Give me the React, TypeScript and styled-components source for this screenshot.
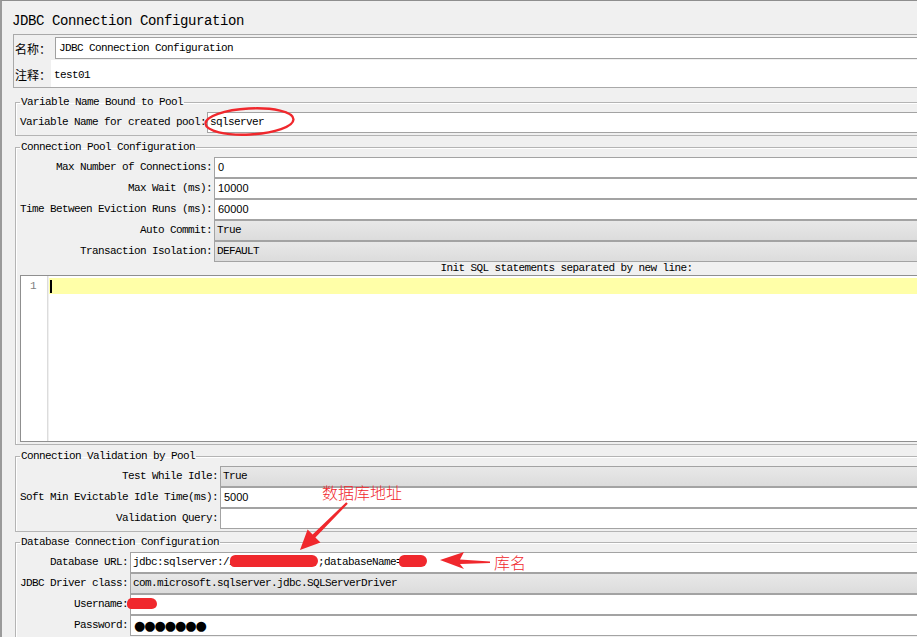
import styled, { createGlobalStyle } from "styled-components";

const MONO = `"Liberation Mono", "Noto Sans CJK SC", monospace`;
const CJK = `"Noto Sans CJK SC", sans-serif`;
const RED = "#f0282d";

const Global = createGlobalStyle`
  html, body {
    margin: 0;
    padding: 0;
    background: #f0f0f0;
    overflow: hidden;
  }
  body {
    font-family: ${MONO};
    font-size: 11px;
    letter-spacing: -0.6px;
    color: #000;
  }
`;

const Window = styled.div`
  position: relative;
  width: 917px;
  height: 637px;
  box-sizing: border-box;
  border-top: 1px solid #8e8e8e;
  border-left: 2px solid #9a9a9a;
  background: #f0f0f0;
  overflow: hidden;
`;

const Title = styled.div`
  height: 33px;
  box-sizing: border-box;
  padding: 7px 0 0 10px;
  font-size: 14px;
  letter-spacing: -0.4px;
  line-height: 26px;
`;

const NamePanel = styled.div`
  margin-left: 11px;
  height: 54px;
  box-sizing: border-box;
  border: 1px solid #a9a9a9;
  border-right: none;
  padding-top: 2px;
  display: flex;
  flex-direction: column;
  gap: 1px;
`;

const NameRow = styled.div<{ $h: number }>`
  display: flex;
  height: ${(p) => p.$h}px;
`;

const CnLabel = styled.div<{ $w: number }>`
  width: ${(p) => p.$w}px;
  padding: 1px 0 0 1px;
  box-sizing: border-box;
  font-family: ${CJK};
  font-size: 12px;
  letter-spacing: 0;
  display: flex;
  align-items: center;
`;

const NameInput = styled.div`
  flex: 1;
  background: #fff;
  border: 1px solid #a0a0a0;
  border-right: none;
  padding-left: 3px;
  line-height: 20px;
`;

const Comment = styled.div`
  flex: 1;
  background: #fff;
  padding: 2px 0 0 3px;
  line-height: 26px;
`;

const Group = styled.fieldset<{ $mt: number }>`
  margin: ${(p) => p.$mt}px 0 0 13px;
  padding: 4px 0 2px 4px;
  border: 1px solid #b4b4b4;
  border-right: none;
  min-width: 0;
  box-shadow: inset 1px 1px 0 #fff;
`;

const Legend = styled.legend`
  padding: 0 1px;
  margin-left: 0;
  line-height: 12px;
  font-size: 11px;
`;

const FormRow = styled.div<{ $label: number }>`
  display: grid;
  grid-template-columns: ${(p) => p.$label}px 1fr;
  height: 21px;
`;

const Label = styled.div<{ $left?: boolean }>`
  text-align: ${(p) => (p.$left ? "left" : "right")};
  padding-right: 2px;
  line-height: 21px;
  white-space: nowrap;
`;

const Field = styled.div<{ $gray?: boolean }>`
  height: 21px;
  box-sizing: border-box;
  border-top: 1px solid #a3a3a3;
  border-bottom: 1px solid #a3a3a3;
  border-left: 1px solid #a3a3a3;
  background: ${(p) => (p.$gray ? "linear-gradient(#e8e8e8, #dcdcdc)" : "#fff")};
  padding-left: 2px;
  line-height: 19px;
  white-space: nowrap;
  overflow: hidden;
`;

const Num = styled.span`
  font-family: "Liberation Sans", Arial, sans-serif;
  font-size: 11px;
  letter-spacing: 0;
  padding-left: 1px;
`;

/* the real window is wider than the shot, so the caption sits right of centre */
const InitLabel = styled.div`
  height: 13px;
  line-height: 13px;
  padding-left: 196px;
  text-align: center;
  white-space: nowrap;
`;

const Editor = styled.div`
  height: 167px;
  box-sizing: border-box;
  border: 1px solid #8f8f8f;
  border-right: none;
  background: #fff;
  display: flex;
`;

const Gutter = styled.div`
  width: 27px;
  border-right: 1px solid #dcdcdc;
  color: #808080;
  padding: 3px 0 0 9px;
  box-sizing: border-box;
  line-height: 14px;
`;

const EditArea = styled.div`
  flex: 1;
  padding-top: 2px;
  border-left: 1px solid #f0f0f0;
`;

const ActiveLine = styled.div`
  height: 16px;
  background: #ffffa8;
  display: flex;
  align-items: center;
  padding-left: 1px;
`;

const Caret = styled.div`
  width: 2px;
  height: 13px;
  background: #000;
`;

const Blob = styled.span<{ $w: number; $pull: number }>`
  display: inline-block;
  vertical-align: middle;
  width: ${(p) => p.$w}px;
  height: 12px;
  margin: -2px 0 0 ${(p) => -p.$pull}px;
  border-radius: 6px 7px 7px 5px;
  background: ${RED};
`;

const Dots = styled.span`
  font-family: "DejaVu Sans", sans-serif;
  font-size: 13px;
  letter-spacing: -1.1px;
  padding-left: 1px;
`;

const Overlay = styled.svg`
  position: absolute;
  left: 0;
  top: 0;
  pointer-events: none;
`;

const Note = styled.div<{ $x: number; $y: number }>`
  position: absolute;
  left: ${(p) => p.$x}px;
  top: ${(p) => p.$y}px;
  font-family: ${CJK};
  font-size: 16px;
  font-weight: 300;
  letter-spacing: 0;
  color: ${RED};
  line-height: 18px;
`;

const Smudge = styled.div`
  position: absolute;
  left: 125px;
  top: 597px;
  width: 30px;
  height: 11px;
  border-radius: 6px 7px 6px 5px;
  background: ${RED};
`;

export default function App() {
  return (
    <>
      <Global />
      <Window>
        <Title>JDBC Connection Configuration</Title>

        <NamePanel>
          <NameRow $h={22}>
            <CnLabel $w={41}>名称：</CnLabel>
            <NameInput>JDBC Connection Configuration</NameInput>
          </NameRow>
          <NameRow $h={27}>
            <CnLabel $w={37}>注释：</CnLabel>
            <Comment>test01</Comment>
          </NameRow>
        </NamePanel>

        <Group $mt={8}>
          <Legend>Variable Name Bound to Pool</Legend>
          <FormRow $label={187}>
            <Label $left>Variable Name for created pool:</Label>
            <Field>sqlserver</Field>
          </FormRow>
        </Group>

        <Group $mt={5}>
          <Legend>Connection Pool Configuration</Legend>
          <FormRow $label={194}>
            <Label>Max Number of Connections:</Label>
            <Field><Num>0</Num></Field>
          </FormRow>
          <FormRow $label={194}>
            <Label>Max Wait (ms):</Label>
            <Field><Num>10000</Num></Field>
          </FormRow>
          <FormRow $label={194}>
            <Label>Time Between Eviction Runs (ms):</Label>
            <Field><Num>60000</Num></Field>
          </FormRow>
          <FormRow $label={194}>
            <Label>Auto Commit:</Label>
            <Field $gray>True</Field>
          </FormRow>
          <FormRow $label={194}>
            <Label>Transaction Isolation:</Label>
            <Field $gray>DEFAULT</Field>
          </FormRow>
          <InitLabel>Init SQL statements separated by new line:</InitLabel>
          <Editor>
            <Gutter>1</Gutter>
            <EditArea>
              <ActiveLine>
                <Caret />
              </ActiveLine>
            </EditArea>
          </Editor>
        </Group>

        <Group $mt={5}>
          <Legend>Connection Validation by Pool</Legend>
          <FormRow $label={200}>
            <Label>Test While Idle:</Label>
            <Field $gray>True</Field>
          </FormRow>
          <FormRow $label={200}>
            <Label>Soft Min Evictable Idle Time(ms):</Label>
            <Field><Num>5000</Num></Field>
          </FormRow>
          <FormRow $label={200}>
            <Label>Validation Query:</Label>
            <Field />
          </FormRow>
        </Group>

        <Group $mt={4}>
          <Legend>Database Connection Configuration</Legend>
          <FormRow $label={110}>
            <Label>Database URL:</Label>
            <Field>
              jdbc:sqlserver://<Blob $w={88} $pull={5} />;databaseName=<Blob $w={28} $pull={3} />
            </Field>
          </FormRow>
          <FormRow $label={110}>
            <Label>JDBC Driver class:</Label>
            <Field $gray>com.microsoft.sqlserver.jdbc.SQLServerDriver</Field>
          </FormRow>
          <FormRow $label={110}>
            <Label>Username:</Label>
            <Field />
          </FormRow>
          <FormRow $label={110}>
            <Label>Password:</Label>
            <Field>
              <Dots>●●●●●●●</Dots>
            </Field>
          </FormRow>
        </Group>

        <Smudge />
        <Note $x={320} $y={482}>数据库地址</Note>
        <Note $x={492} $y={552}>库名</Note>

        <Overlay width="917" height="637" viewBox="0 0 917 637">
          <ellipse cx="247.5" cy="120.5" rx="44" ry="13" fill="none" stroke={RED} strokeWidth="2.4" transform="rotate(-3 247.5 120.5)" />
          <polygon
            fill={RED}
            points="298,549 318.5,541.5 313.4,536.4 345.8,502.8 344.2,501.2 310.6,533.6 305.6,528.6"
          />
          <polygon
            fill={RED}
            points="438,559 462,551 458,558.5 488,560.5 488,562 458,563 462,568"
          />
        </Overlay>
      </Window>
    </>
  );
}
